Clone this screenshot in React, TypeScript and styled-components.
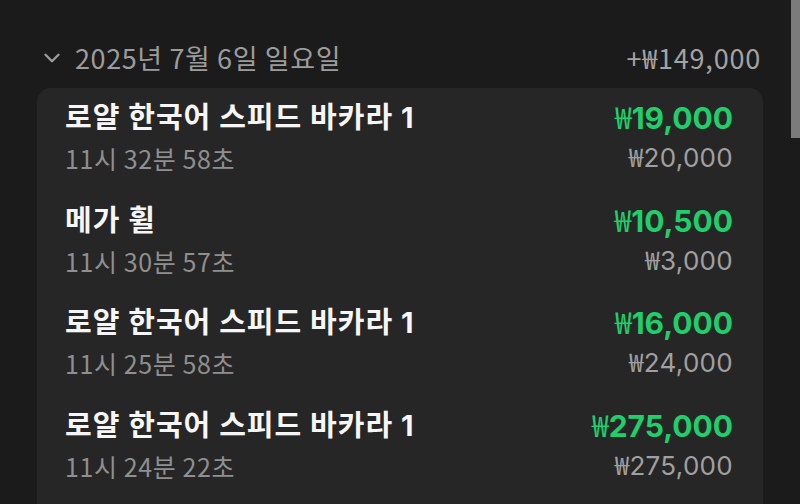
import styled, { createGlobalStyle } from "styled-components";
import { ChevronDown } from "lucide-react";

const GlobalStyle = createGlobalStyle`
  html, body {
    margin: 0;
    padding: 0;
    height: 100%;
    overflow: hidden;
    background: #1b1b1b;
  }
`;

const korean = `"Noto Sans CJK KR", "Noto Sans", sans-serif`;
const latin = `Inter, "Noto Sans CJK KR", sans-serif`;

const Page = styled.div`
  padding: 40px 37px 0 37px;
  font-family: ${korean};
`;

const DayHeader = styled.div`
  display: flex;
  align-items: center;
  justify-content: space-between;
  height: 36px;
  margin-bottom: 12px;
  padding-left: 2px;
  color: #9c9c9c;
`;

const DayLabel = styled.div`
  display: flex;
  align-items: center;
  gap: 10px;
  font-size: 27px;
  line-height: 36px;
  letter-spacing: 0.6px;
`;

const DayTotal = styled.div`
  font-size: 27px;
  line-height: 36px;
  letter-spacing: 0.8px;
  color: #a3a3a3;
  margin-right: 2px;
`;

/* the card runs on past the bottom of the view */
const Card = styled.div`
  background: #262626;
  border-radius: 14px;
  padding: 0 30px 40px 28px;
`;

const Row = styled.div`
  display: flex;
  justify-content: space-between;
  padding: 12px 0 16.5px;
`;

const Column = styled.div<{ $align?: "left" | "right" }>`
  display: flex;
  flex-direction: column;
  gap: 6px;
  align-items: ${({ $align }) => ($align === "right" ? "flex-end" : "flex-start")};
`;

const Title = styled.div`
  height: 36px;
  font-family: ${latin};
  font-weight: 700;
  font-size: 29px;
  line-height: 36px;
  color: #f6f6f6;
  letter-spacing: 1px;
  white-space: nowrap;
`;

const Time = styled.div`
  height: 32px;
  font-size: 25px;
  line-height: 32px;
  letter-spacing: 0.6px;
  color: #8f8f8f;
`;

const Payout = styled.div`
  height: 36px;
  font-family: ${latin};
  font-weight: 700;
  font-size: 30px;
  line-height: 36px;
  color: #20cf6c;
`;

const Stake = styled.div`
  height: 32px;
  font-family: ${latin};
  font-size: 26px;
  line-height: 32px;
  letter-spacing: 0.3px;
  color: #a0a0a0;
`;

const Won = styled.span`
  font-family: ${korean};
  font-weight: 400;
  line-height: 1;
`;

const ScrollThumb = styled.div`
  position: fixed;
  top: 0;
  right: 0;
  width: 9px;
  height: 138px;
  background: #7b7b7b;
`;

interface Bet {
  game: string;
  time: string;
  payout: string;
  stake: string;
}

const bets: Bet[] = [
  { game: "로얄 한국어 스피드 바카라 1", time: "11시 32분 58초", payout: "19,000", stake: "20,000" },
  { game: "메가 휠", time: "11시 30분 57초", payout: "10,500", stake: "3,000" },
  { game: "로얄 한국어 스피드 바카라 1", time: "11시 25분 58초", payout: "16,000", stake: "24,000" },
  { game: "로얄 한국어 스피드 바카라 1", time: "11시 24분 22초", payout: "275,000", stake: "275,000" },
];

const App = () => (
  <Page>
    <GlobalStyle />
    <DayHeader>
      <DayLabel>
        <ChevronDown size={26} strokeWidth={2.2} />
        <span>2025년 7월 6일 일요일</span>
      </DayLabel>
      <DayTotal>+₩149,000</DayTotal>
    </DayHeader>
    <Card>
      {bets.map((bet, i) => (
        <Row key={i}>
          <Column>
            <Title>{bet.game}</Title>
            <Time>{bet.time}</Time>
          </Column>
          <Column $align="right">
            <Payout>
              <Won>₩</Won>
              {bet.payout}
            </Payout>
            <Stake>
              <Won>₩</Won>
              {bet.stake}
            </Stake>
          </Column>
        </Row>
      ))}
    </Card>
    <ScrollThumb />
  </Page>
);

export default App;
